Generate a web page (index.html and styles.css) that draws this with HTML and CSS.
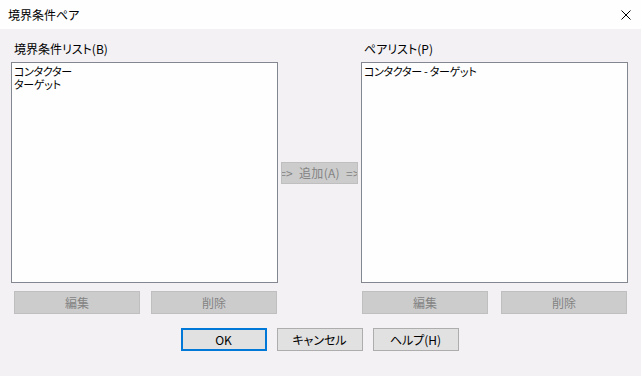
FILE: index.html
```html
<!DOCTYPE html>
<html lang="ja">
<head>
  <meta charset="UTF-8">
  <title>境界条件ペア</title>
  <link rel="stylesheet" href="styles.css">
</head>
<body>
  <div class="dialog">
    <div class="titlebar">
      <span class="title">境界条件ペア</span>
      <svg class="close" width="10" height="10" viewBox="0 0 10 10">
        <path d="M0.5 0.5 L9.5 9.5 M9.5 0.5 L0.5 9.5" stroke="#000" stroke-width="1" fill="none"/>
      </svg>
    </div>
    <div class="content">
      <div class="panes">
        <div class="pane">
          <div class="label">境界条件リスト(B)</div>
          <div class="listbox">
            <div class="item">コンタクター</div>
            <div class="item">ターゲット</div>
          </div>
          <div class="pane-buttons left">
            <button class="btn disabled">編集</button>
            <button class="btn disabled">削除</button>
          </div>
        </div>
        <div class="middle">
          <button class="btn disabled add"><span>=&gt; 追加(A) =&gt;</span></button>
        </div>
        <div class="pane">
          <div class="label">ペアリスト(P)</div>
          <div class="listbox">
            <div class="item">コンタクター - ターゲット</div>
          </div>
          <div class="pane-buttons right">
            <button class="btn disabled">編集</button>
            <button class="btn disabled">削除</button>
          </div>
        </div>
      </div>
      <div class="footer">
        <button class="btn default">OK</button>
        <button class="btn">キャンセル</button>
        <button class="btn">ヘルプ(H)</button>
      </div>
    </div>
  </div>
</body>
</html>
```

FILE: styles.css
```css
* {
  margin: 0;
  padding: 0;
  box-sizing: border-box;
}
body {
  font-family: "Noto Sans CJK JP", "Noto Sans", sans-serif;
  font-size: 12px;
  font-feature-settings: "palt";
  color: #000;
  background: #f3f1f4;
  width: 641px;
  height: 376px;
  overflow: hidden;
}
.titlebar {
  height: 29px;
  background: #fdfefd;
  display: flex;
  align-items: center;
  justify-content: space-between;
  padding: 0 10px 0 8px;
}
.title {
  line-height: 16px;
}
.close {
  display: block;
}
/* main area */
.content {
  padding: 12px 13px 0 11px;
}
.panes {
  display: grid;
  grid-template-columns: 267px 1fr 267px;
}
.label {
  line-height: 16px;
  padding-left: 3px;
  height: 16px;
  margin-bottom: 5px;
}
.listbox {
  height: 221px;
  border: 1px solid #828790;
  background: #fdfefd;
  padding: 2px 2px;
}
.item {
  font-size: 11px;
  line-height: 13px;
  letter-spacing: -0.3px;
  white-space: nowrap;
}
.middle {
  display: flex;
  align-items: center;
  justify-content: center;
  padding-top: 21px;
  padding-bottom: 31px;
}
.pane-buttons {
  display: flex;
  justify-content: space-between;
  margin-top: 8px;
}
.pane-buttons.left {
  padding: 0 1px 0 3px;
}
.pane-buttons.right {
  padding: 0 1px 0 1px;
}
/* buttons */
.btn {
  font: inherit;
  font-feature-settings: "palt";
  width: 126px;
  height: 23px;
  background: #e1e1e1;
  border: 1px solid #adadad;
  color: #000;
  line-height: 16px;
}
.btn.disabled {
  background: #cccccc;
  border-color: #bfbfbf;
  color: #838383;
}
.btn.add {
  width: 77px;
  height: 22px;
  overflow: hidden;
  white-space: nowrap;
  display: flex;
  align-items: center;
  justify-content: center;
  word-spacing: 3px;
  letter-spacing: 0.3px;
}
.footer {
  display: flex;
  justify-content: center;
  gap: 10px;
  margin-top: 14px;
}
.footer .btn {
  width: 86px;
  height: 23px;
}
.btn.default {
  border: 2px solid #0078d7;
}
```
